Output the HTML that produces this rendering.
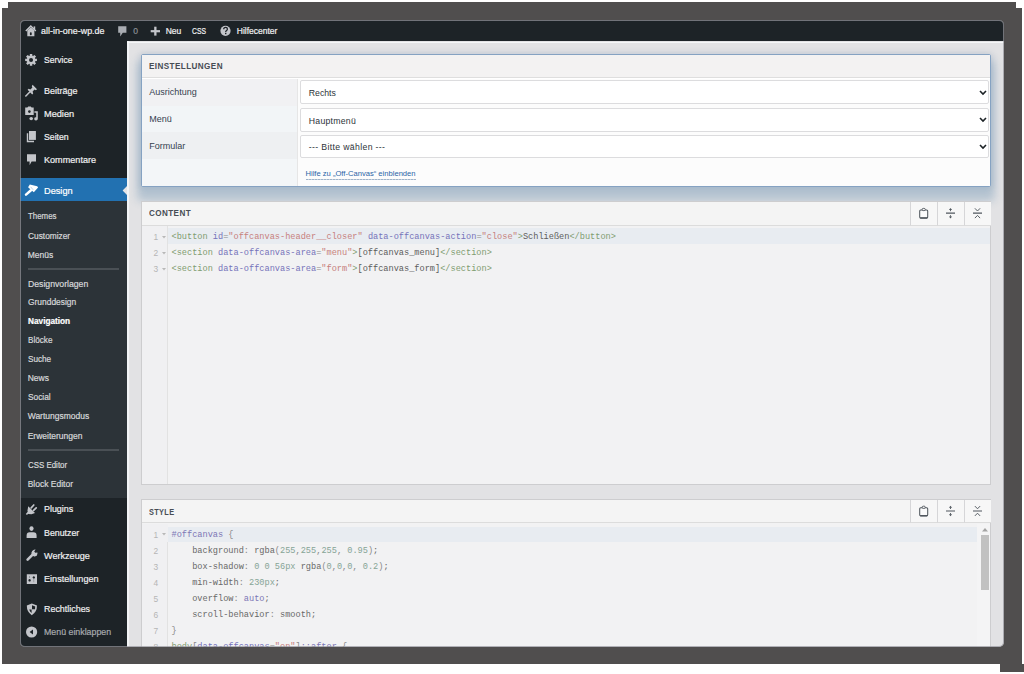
<!DOCTYPE html>
<html><head><meta charset="utf-8">
<style>
*{margin:0;padding:0;box-sizing:border-box}
html,body{width:1024px;height:674px;overflow:hidden;background:#fff;font-family:"Liberation Sans",sans-serif}
.a{position:absolute}
.t{position:absolute;line-height:1;white-space:nowrap;-webkit-text-stroke:0.2px currentColor}
.m{font-family:"Liberation Mono",monospace;white-space:pre;color:#555;-webkit-text-stroke:0}
.ln{-webkit-text-stroke:0}
.d{-webkit-text-stroke:0}
.h{-webkit-text-stroke:0}
.fr{position:absolute;background:#504e4e}
#screen{position:absolute;left:20px;top:20px;width:984px;height:627px;background:#e2e2e4;border-radius:5px;overflow:hidden}
#ring{position:absolute;left:20px;top:20px;width:984px;height:627px;border-radius:5px;box-shadow:inset 0 0 0 1px rgba(150,150,156,0.7)}
svg{position:absolute;overflow:visible}
.tg{color:#7f9c70}.at{color:#7673ba}.st{color:#c77f7d}.tx{color:#5c5c5c}.nm{color:#86a496}.pu{color:#7d76b5}.gr{color:#8a8a8a}.pr{color:#686868}
</style></head>
<body>
<div class="fr" style="left:8px;top:2px;width:1008px;height:8px"></div>
<div class="fr" style="left:2px;top:8px;width:1020px;height:656px"></div>
<div class="fr" style="left:1000px;top:664px;width:24px;height:8px"></div>
<div id="screen">
<div class="a" style="left:0.00px;top:0.00px;width:984.00px;height:21.00px;background:#1d2327;"></div>
<div class="t " style="left:21.20px;top:7.20px;font-size:8.5px;color:#f0f0f1;transform:scaleX(1.050);transform-origin:0 0;">all-in-one-wp.de</div>
<div class="t " style="left:113.30px;top:7.20px;font-size:8.5px;color:#8c8f94;">0</div>
<div class="t " style="left:145.70px;top:7.20px;font-size:8.5px;color:#f0f0f1;">Neu</div>
<div class="t " style="left:171.70px;top:7.20px;font-size:8.5px;color:#f0f0f1;transform:scaleX(0.800);transform-origin:0 0;">CSS</div>
<div class="t " style="left:216.80px;top:7.20px;font-size:8.5px;color:#f0f0f1;">Hilfecenter</div>
<div class="a" style="left:0.00px;top:21.00px;width:107.00px;height:606.00px;background:#1d2327;"></div>
<div class="a" style="left:0.00px;top:158.20px;width:107.00px;height:22.80px;background:#2271b1;"></div>
<div class="a" style="left:0.00px;top:181.00px;width:107.00px;height:296.70px;background:#2c3338;"></div>
<div class="t " style="left:23.60px;top:35.44px;font-size:9.4px;color:#f0f0f1;transform:scaleX(0.910);transform-origin:0 0;">Service</div>
<div class="t " style="left:23.60px;top:65.94px;font-size:9.4px;color:#f0f0f1;transform:scaleX(0.960);transform-origin:0 0;">Beiträge</div>
<div class="t " style="left:23.60px;top:89.04px;font-size:9.4px;color:#f0f0f1;transform:scaleX(0.980);transform-origin:0 0;">Medien</div>
<div class="t " style="left:23.60px;top:112.24px;font-size:9.4px;color:#f0f0f1;transform:scaleX(0.930);transform-origin:0 0;">Seiten</div>
<div class="t " style="left:23.60px;top:135.24px;font-size:9.4px;color:#f0f0f1;transform:scaleX(0.970);transform-origin:0 0;">Kommentare</div>
<div class="t " style="left:23.60px;top:165.64px;font-size:9.4px;color:#fff;transform:scaleX(0.980);transform-origin:0 0;">Design</div>
<div class="t " style="left:23.60px;top:484.34px;font-size:9.4px;color:#f0f0f1;transform:scaleX(0.950);transform-origin:0 0;">Plugins</div>
<div class="t " style="left:23.60px;top:507.94px;font-size:9.4px;color:#f0f0f1;transform:scaleX(0.940);transform-origin:0 0;">Benutzer</div>
<div class="t " style="left:23.60px;top:530.84px;font-size:9.4px;color:#f0f0f1;transform:scaleX(0.970);transform-origin:0 0;">Werkzeuge</div>
<div class="t " style="left:23.60px;top:554.24px;font-size:9.4px;color:#f0f0f1;transform:scaleX(0.970);transform-origin:0 0;">Einstellungen</div>
<div class="t " style="left:23.60px;top:584.44px;font-size:9.4px;color:#f0f0f1;transform:scaleX(0.950);transform-origin:0 0;">Rechtliches</div>
<div class="t " style="left:23.60px;top:607.04px;font-size:9.4px;color:#a7aaad;transform:scaleX(0.940);transform-origin:0 0;">Menü einklappen</div>
<div class="t " style="left:7.70px;top:191.80px;font-size:8.5px;color:#d6d7d9;transform:scaleX(0.930);transform-origin:0 0;">Themes</div>
<div class="t " style="left:7.70px;top:211.60px;font-size:8.5px;color:#d6d7d9;transform:scaleX(0.980);transform-origin:0 0;">Customizer</div>
<div class="t " style="left:7.70px;top:230.60px;font-size:8.5px;color:#d6d7d9;transform:scaleX(1.000);transform-origin:0 0;">Menüs</div>
<div class="t " style="left:7.70px;top:259.60px;font-size:8.5px;color:#d6d7d9;transform:scaleX(1.020);transform-origin:0 0;">Designvorlagen</div>
<div class="t " style="left:7.70px;top:278.40px;font-size:8.5px;color:#d6d7d9;transform:scaleX(0.990);transform-origin:0 0;">Grunddesign</div>
<div class="t " style="left:7.70px;top:297.20px;font-size:8.5px;color:#fff;font-weight:bold;transform:scaleX(0.970);transform-origin:0 0;">Navigation</div>
<div class="t " style="left:7.70px;top:316.20px;font-size:8.5px;color:#d6d7d9;transform:scaleX(0.960);transform-origin:0 0;">Blöcke</div>
<div class="t " style="left:7.70px;top:335.20px;font-size:8.5px;color:#d6d7d9;transform:scaleX(0.960);transform-origin:0 0;">Suche</div>
<div class="t " style="left:7.70px;top:354.20px;font-size:8.5px;color:#d6d7d9;transform:scaleX(1.000);transform-origin:0 0;">News</div>
<div class="t " style="left:7.70px;top:373.20px;font-size:8.5px;color:#d6d7d9;transform:scaleX(0.980);transform-origin:0 0;">Social</div>
<div class="t " style="left:7.70px;top:392.20px;font-size:8.5px;color:#d6d7d9;transform:scaleX(1.000);transform-origin:0 0;">Wartungsmodus</div>
<div class="t " style="left:7.70px;top:411.80px;font-size:8.5px;color:#d6d7d9;transform:scaleX(1.000);transform-origin:0 0;">Erweiterungen</div>
<div class="t " style="left:7.70px;top:440.80px;font-size:8.5px;color:#d6d7d9;transform:scaleX(0.930);transform-origin:0 0;">CSS Editor</div>
<div class="t " style="left:7.70px;top:459.60px;font-size:8.5px;color:#d6d7d9;transform:scaleX(1.000);transform-origin:0 0;">Block Editor</div>
<div class="a" style="left:7.70px;top:247.60px;width:91.30px;height:2.00px;background:#4a5055;"></div>
<div class="a" style="left:7.70px;top:428.70px;width:91.30px;height:2.00px;background:#4a5055;"></div>
<svg style="left:101.5px;top:164.8px" width="6" height="11"><path d="M6 0 L0.6 5.5 L6 11 Z" fill="#e4e4e6"/></svg>
<div class="a" style="left:107.00px;top:21.00px;width:1.50px;height:606.00px;background:rgba(245,247,249,0.85);"></div>
<div class="a" style="left:107.00px;top:21.50px;width:877.00px;height:1.50px;background:rgba(248,250,252,0.85);"></div>
<div class="a" style="left:120.50px;top:33.50px;width:850.50px;height:133.20px;background:#fff;border:1px solid #85a2c2;border-radius:2px;box-shadow:0 10px 8px 4px rgba(75,125,165,0.3), 0 0 6px 1px rgba(90,120,160,0.2)"></div>
<div class="a" style="left:121.50px;top:34.50px;width:848.50px;height:23.50px;background:#f3f2f2;border-bottom:1px solid #dedede"></div>
<div class="t h" style="left:128.70px;top:42.37px;font-size:8.9px;color:#474d54;font-weight:bold;letter-spacing:0.45px;transform:scaleX(0.915);transform-origin:0 0;">EINSTELLUNGEN</div>
<div class="a" style="left:121.50px;top:58.50px;width:155.50px;height:27.20px;background:#f1f1f3;"></div>
<div class="a" style="left:121.50px;top:85.70px;width:155.50px;height:26.50px;background:#f2f5f7;"></div>
<div class="a" style="left:121.50px;top:112.20px;width:155.50px;height:26.40px;background:#eef0f2;"></div>
<div class="a" style="left:121.50px;top:138.60px;width:155.50px;height:27.10px;background:#f3f6f8;"></div>
<div class="a" style="left:277.00px;top:58.50px;width:693.00px;height:107.20px;background:#fcfcfc;border-left:1px solid #e6e6e6"></div>
<div class="t d" style="left:129.20px;top:68.08px;font-size:9.0px;color:#35414f;">Ausrichtung</div>
<div class="t d" style="left:129.20px;top:94.88px;font-size:9.0px;color:#35414f;">Menü</div>
<div class="t d" style="left:129.20px;top:121.88px;font-size:9.0px;color:#35414f;">Formular</div>
<div class="a" style="left:279.70px;top:60.20px;width:688.90px;height:23.80px;background:#fff;border:1px solid #dcdcde;border-radius:2px"></div>
<div class="t d" style="left:288.80px;top:68.94px;font-size:8.7px;color:#2c3338;letter-spacing:0px;">Rechts</div>
<svg style="left:959px;top:69.70px" width="8" height="5"><path d="M1 1 L4 4 L7 1" stroke="#1d2327" stroke-width="1.6" fill="none"/></svg>
<div class="a" style="left:279.70px;top:87.80px;width:688.90px;height:23.80px;background:#fff;border:1px solid #dcdcde;border-radius:2px"></div>
<div class="t d" style="left:288.80px;top:96.54px;font-size:8.7px;color:#2c3338;letter-spacing:0.25px;">Hauptmenü</div>
<svg style="left:959px;top:97.30px" width="8" height="5"><path d="M1 1 L4 4 L7 1" stroke="#1d2327" stroke-width="1.6" fill="none"/></svg>
<div class="a" style="left:279.70px;top:114.60px;width:688.90px;height:23.80px;background:#fff;border:1px solid #dcdcde;border-radius:2px"></div>
<div class="t d" style="left:288.80px;top:123.34px;font-size:8.7px;color:#2c3338;letter-spacing:0.35px;">--- Bitte wählen ---</div>
<svg style="left:959px;top:124.10px" width="8" height="5"><path d="M1 1 L4 4 L7 1" stroke="#1d2327" stroke-width="1.6" fill="none"/></svg>
<div class="t h" style="left:285.50px;top:149.87px;font-size:7.6px;color:#2a64a6;">Hilfe zu „Off-Canvas“ einblenden</div>
<div class="a" style="left:285.50px;top:158.60px;width:110.00px;height:1.00px;background:repeating-linear-gradient(90deg,#9fb3c9 0 2px,#c8d3df 2px 3px);"></div>
<div class="a" style="left:121.00px;top:181.00px;width:850.00px;height:283.70px;background:#f2f2f3;border:1px solid #cdcdcf"></div>
<div class="a" style="left:122.00px;top:182.00px;width:848.00px;height:23.50px;background:#f4f4f4;border-bottom:1px solid #dcdcdc"></div>
<div class="t h" style="left:128.80px;top:189.37px;font-size:8.9px;color:#474d54;font-weight:bold;letter-spacing:0.45px;transform:scaleX(0.912);transform-origin:0 0;">CONTENT</div>
<div class="a" style="left:890.00px;top:182.00px;width:27.00px;height:23.50px;background:#f7f7f7;border-left:1px solid #d6d6d8;border-bottom:1px solid #dcdcdc"></div>
<div class="a" style="left:917.00px;top:182.00px;width:27.00px;height:23.50px;background:#f7f7f7;border-left:1px solid #d6d6d8;border-bottom:1px solid #dcdcdc"></div>
<div class="a" style="left:944.00px;top:182.00px;width:27.00px;height:23.50px;background:#f7f7f7;border-left:1px solid #d6d6d8;border-bottom:1px solid #dcdcdc"></div>
<div class="a" style="left:122.00px;top:206.00px;width:26.00px;height:257.70px;background:#f0f0f2;"></div>
<div class="a" style="left:147.30px;top:206.00px;width:1.00px;height:257.70px;background:#e2e2e2;"></div>
<div class="a" style="left:148.00px;top:208.30px;width:822.00px;height:16.00px;background:#e8ecf1;"></div>
<div class="t m" style="left:151.50px;top:212.60px;font-size:8.62px;"><span class="tg">&lt;button</span> <span class="at">id</span><span class="gr">=</span><span class="st">"offcanvas-header__closer"</span> <span class="at">data-offcanvas-action</span><span class="gr">=</span><span class="st">"close"</span><span class="tg">&gt;</span><span class="tx">Schließen</span><span class="tg">&lt;/button&gt;</span></div>
<div class="t ln" style="left:133.60px;top:212.79px;font-size:8.4px;color:#b5b5b5;">1</div>
<svg style="left:142px;top:215.90px" width="4" height="3"><path d="M0 0 L4 0 L2 2.5Z" fill="#b8b8b8"/></svg>
<div class="t m" style="left:151.50px;top:228.60px;font-size:8.62px;"><span class="tg">&lt;section</span> <span class="at">data-offcanvas-area</span><span class="gr">=</span><span class="st">"menu"</span><span class="tg">&gt;</span><span class="tx">[offcanvas_menu]</span><span class="tg">&lt;/section&gt;</span></div>
<div class="t ln" style="left:133.60px;top:228.79px;font-size:8.4px;color:#b5b5b5;">2</div>
<svg style="left:142px;top:231.90px" width="4" height="3"><path d="M0 0 L4 0 L2 2.5Z" fill="#b8b8b8"/></svg>
<div class="t m" style="left:151.50px;top:244.60px;font-size:8.62px;"><span class="tg">&lt;section</span> <span class="at">data-offcanvas-area</span><span class="gr">=</span><span class="st">"form"</span><span class="tg">&gt;</span><span class="tx">[offcanvas_form]</span><span class="tg">&lt;/section&gt;</span></div>
<div class="t ln" style="left:133.60px;top:244.79px;font-size:8.4px;color:#b5b5b5;">3</div>
<svg style="left:142px;top:247.90px" width="4" height="3"><path d="M0 0 L4 0 L2 2.5Z" fill="#b8b8b8"/></svg>
<div class="a" style="left:121.00px;top:478.80px;width:850.00px;height:161.20px;background:#f2f2f3;border:1px solid #cdcdcf"></div>
<div class="a" style="left:122.00px;top:479.80px;width:848.00px;height:23.50px;background:#f4f4f4;border-bottom:1px solid #dcdcdc"></div>
<div class="t h" style="left:128.80px;top:487.67px;font-size:8.9px;color:#474d54;font-weight:bold;letter-spacing:0.45px;transform:scaleX(0.826);transform-origin:0 0;">STYLE</div>
<div class="a" style="left:890.00px;top:479.80px;width:27.00px;height:23.50px;background:#f7f7f7;border-left:1px solid #d6d6d8;border-bottom:1px solid #dcdcdc"></div>
<div class="a" style="left:917.00px;top:479.80px;width:27.00px;height:23.50px;background:#f7f7f7;border-left:1px solid #d6d6d8;border-bottom:1px solid #dcdcdc"></div>
<div class="a" style="left:944.00px;top:479.80px;width:27.00px;height:23.50px;background:#f7f7f7;border-left:1px solid #d6d6d8;border-bottom:1px solid #dcdcdc"></div>
<div class="a" style="left:122.00px;top:504.00px;width:26.00px;height:136.00px;background:#f0f0f2;"></div>
<div class="a" style="left:147.30px;top:521.60px;width:1.00px;height:118.40px;background:#e2e2e2;"></div>
<div class="a" style="left:148.00px;top:506.60px;width:809.00px;height:15.00px;background:#e8ecf1;"></div>
<div class="t m" style="left:151.50px;top:510.60px;font-size:8.62px;"><span class="pu">#offcanvas</span> <span class="gr">{</span></div>
<div class="t ln" style="left:133.60px;top:510.79px;font-size:8.4px;color:#b5b5b5;">1</div>
<div class="t m" style="left:151.50px;top:526.60px;font-size:8.62px;">    <span class="pr">background</span><span class="gr">:</span> <span class="pr">rgba</span><span class="gr">(</span><span class="nm">255</span><span class="gr">,</span><span class="nm">255</span><span class="gr">,</span><span class="nm">255</span><span class="gr">,</span> <span class="nm">0.95</span><span class="gr">)</span><span class="pr">;</span></div>
<div class="t ln" style="left:133.60px;top:526.79px;font-size:8.4px;color:#b5b5b5;">2</div>
<div class="t m" style="left:151.50px;top:542.60px;font-size:8.62px;">    <span class="pr">box-shadow</span><span class="gr">:</span> <span class="nm">0 0 56px</span> <span class="pr">rgba</span><span class="gr">(</span><span class="nm">0</span><span class="gr">,</span><span class="nm">0</span><span class="gr">,</span><span class="nm">0</span><span class="gr">,</span> <span class="nm">0.2</span><span class="gr">)</span><span class="pr">;</span></div>
<div class="t ln" style="left:133.60px;top:542.79px;font-size:8.4px;color:#b5b5b5;">3</div>
<div class="t m" style="left:151.50px;top:558.60px;font-size:8.62px;">    <span class="pr">min-width</span><span class="gr">:</span> <span class="nm">230px</span><span class="pr">;</span></div>
<div class="t ln" style="left:133.60px;top:558.79px;font-size:8.4px;color:#b5b5b5;">4</div>
<div class="t m" style="left:151.50px;top:574.60px;font-size:8.62px;">    <span class="pr">overflow</span><span class="gr">:</span> <span class="pu">auto</span><span class="pr">;</span></div>
<div class="t ln" style="left:133.60px;top:574.79px;font-size:8.4px;color:#b5b5b5;">5</div>
<div class="t m" style="left:151.50px;top:590.60px;font-size:8.62px;">    <span class="pr">scroll-behavior</span><span class="gr">:</span> <span class="pr">smooth</span><span class="pr">;</span></div>
<div class="t ln" style="left:133.60px;top:590.79px;font-size:8.4px;color:#b5b5b5;">6</div>
<div class="t m" style="left:151.50px;top:606.60px;font-size:8.62px;"><span class="gr">}</span></div>
<div class="t ln" style="left:133.60px;top:606.79px;font-size:8.4px;color:#b5b5b5;">7</div>
<div class="t m" style="left:151.50px;top:622.60px;font-size:8.62px;"><span class="tg">body</span><span class="gr">[</span><span class="at">data-offcanvas</span><span class="gr">=</span><span class="st">"on"</span><span class="gr">]</span><span class="pu">::after</span> <span class="gr">{</span></div>
<div class="t ln" style="left:133.60px;top:622.79px;font-size:8.4px;color:#b5b5b5;">8</div>
<svg style="left:142px;top:512.60px" width="4" height="3"><path d="M0 0 L4 0 L2 2.5Z" fill="#b8b8b8"/></svg>
<div class="a" style="left:957.00px;top:504.00px;width:13.00px;height:123.00px;background:#f4f4f5;"></div>
<div class="a" style="left:960.50px;top:515.00px;width:8.50px;height:55.00px;background:#c1c1c1;"></div>
<svg style="left:962px;top:508px" width="6" height="4"><path d="M0 3.5 L3 0 L6 3.5Z" fill="#a3a3a3"/></svg>
<svg style="left:-20px;top:-20px" width="1024" height="674" viewBox="0 0 1024 674"><path d="M25.8 31 L30.8 26 L35.8 31" stroke="#c3c5ca" stroke-width="1.4" fill="none" stroke-linejoin="miter"/><rect x="33.6" y="26.4" width="1.6" height="3" fill="#c3c5ca"/><path d="M27.3 30.6 L30.8 27.2 L34.4 30.6 L34.4 36.2 L27.3 36.2Z" fill="#c3c5ca"/><rect x="29.9" y="32.3" width="1.8" height="3" rx="0.8" fill="#1d2327"/><path d="M118.2 26.2 h8.2 v6.6 h-3.6 l-2.6 3.6 v-3.6 h-2z" fill="#a9adb3"/><rect x="150.7" y="30.1" width="9.3" height="2.2" fill="#c3c5ca"/><rect x="154.2" y="26.7" width="2.3" height="8.9" fill="#c3c5ca"/><circle cx="225.5" cy="30.8" r="5.1" fill="#c3c5ca"/><path d="M223.7 29.3 Q223.7 27.4 225.6 27.4 Q227.4 27.4 227.4 29.1 Q227.4 30.2 226.3 30.8 Q225.7 31.2 225.7 32" stroke="#1d2327" stroke-width="1.3" fill="none"/><rect x="225" y="32.8" width="1.4" height="1.4" fill="#1d2327"/><path d="M35.16 58.63 L36.93 58.71 L36.93 61.09 L35.16 61.17 L34.85 61.91 L36.05 63.22 L34.37 64.90 L33.06 63.70 L32.32 64.01 L32.24 65.78 L29.86 65.78 L29.78 64.01 L29.04 63.70 L27.73 64.90 L26.05 63.22 L27.25 61.91 L26.94 61.17 L25.17 61.09 L25.17 58.71 L26.94 58.63 L27.25 57.89 L26.05 56.58 L27.73 54.90 L29.04 56.10 L29.78 55.79 L29.86 54.02 L32.24 54.02 L32.32 55.79 L33.06 56.10 L34.37 54.90 L36.05 56.58 L34.85 57.89Z M33.05 59.90 A2.0 2.0 0 1 0 29.05 59.90 A2.0 2.0 0 1 0 33.05 59.90Z" fill="#c3c5ca" fill-rule="evenodd"/><path d="M32.6 84.8 L37 89.2 L35.8 90.2 L34.6 89.6 L32.6 91.6 L33.2 93.4 L32.2 94.4 L27.6 89.8 L28.6 88.8 L30.4 89.4 L32.4 87.4 L31.8 86.2Z" fill="#c3c5ca"/><path d="M30 91.8 L25.4 96.6" stroke="#c3c5ca" stroke-width="1.5"/><path d="M25.2 107.6 h2.2 l0.8 -1 h2.6 l0.8 1 h2.1 v7.4 h-8.5z" fill="#c3c5ca"/><circle cx="29.4" cy="111.6" r="1.3" fill="#1d2327"/><path d="M34.4 111.2 h3.4 v7.8 a1.8 1.6 0 1 1 -1.6 -1.7 v-4.6 h-1.8z" fill="#c3c5ca"/><ellipse cx="31.2" cy="118.6" rx="1.8" ry="1.6" fill="#c3c5ca"/><rect x="29" y="131" width="6.9" height="8.9" fill="#c3c5ca"/><path d="M26.8 133.2 h1.4 v7.6 h5.8 v1.4 h-7.2z" fill="#c3c5ca"/><path d="M27 154.2 h9 v7.4 h-4.4 l-2 3.6 v-3.6 h-2.6z" fill="#c3c5ca"/><path d="M29.8 184.6 L37.2 186.2 L38.1 187.4 L33.8 192.2 L28.1 187.3Z" fill="#fff"/><path d="M30.6 186.8 L33.2 189.8" stroke="#9fc0dc" stroke-width="0.7"/><path d="M31 190.2 L26 194.6" stroke="#fff" stroke-width="2.5" stroke-linecap="round"/><path d="M28.2 506.2 L35 513 L31.5 514.2 L28.2 514 L27.5 510.5Z" fill="#c3c5ca"/><path d="M28.6 512 L26.4 514.6" stroke="#c3c5ca" stroke-width="1.6"/><path d="M31.2 507.8 L33.8 505" stroke="#c3c5ca" stroke-width="1.7" stroke-linecap="round"/><path d="M33.6 510.4 L36.2 507.8" stroke="#c3c5ca" stroke-width="1.7" stroke-linecap="round"/><ellipse cx="31.5" cy="528.6" rx="2.1" ry="2.4" fill="#c3c5ca"/><path d="M26.6 538 v-2.6 Q26.6 532.2 29.6 532.2 h3.8 Q36.6 532.2 36.6 535.4 v2.6z" fill="#c3c5ca"/><path d="M27.6 559.6 L33.6 553.6" stroke="#c3c5ca" stroke-width="2.6" stroke-linecap="round"/><path d="M33 550.4 a3.2 3.2 0 1 0 4.4 4.4 l-1.8 0.2 l-1.6 -1.6 z" fill="#c3c5ca"/><path d="M35.6 549.6 A3.3 3.3 0 0 0 32.4 554.8 L34.6 556.4 A3.3 3.3 0 0 0 37.4 552.4 L35.2 552.8 L34.2 551.6Z" fill="#c3c5ca"/><path d="M26.8 574.2 h10.2 v9.8 h-10.2z M29.6 579.1 a1.2 1.2 0 1 0 0.01 0z M33.8 576.3 a1.2 1.2 0 1 0 0.01 0z" fill="#c3c5ca" fill-rule="evenodd"/><rect x="29.2" y="576" width="0.8" height="2" fill="#8d9096"/><rect x="33.4" y="578.6" width="0.8" height="3.6" fill="#8d9096"/><path d="M31.8 603.6 L37 605.6 Q37 612.2 31.8 615.2 Q26.8 612.2 26.8 605.6Z" fill="#c3c5ca"/><path d="M32 605.2 L35.2 606.4 L35 609.2 L32 609.2Z M29.2 609.6 L31.6 609.6 L31.6 613 Q29.8 611.8 29.2 609.6Z" fill="#1d2327"/><circle cx="31.6" cy="632" r="5.6" fill="#c3c5ca"/><path d="M29.6 632 L33 629.6 L33 634.4Z" fill="#1d2327"/><rect x="919.7" y="209.9" width="8" height="8" rx="1" stroke="#50575e" stroke-width="1.05" fill="#fbfbfb"/><path d="M920.2 217.9 h7" stroke="#50575e" stroke-width="1.5"/><rect x="922.1" y="208.4" width="3.2" height="2.2" rx="1.1" stroke="#50575e" stroke-width="0.9" fill="#fbfbfb"/><path d="M946 213.2 h9" stroke="#50575e" stroke-width="1.2"/><path d="M950.5 207.9 l1.6 2 h-3.2z M950.5 218.5 l1.6 -2 h-3.2z" fill="#50575e"/><path d="M950.5 209.6 v1.6 M950.5 215.2 v1.6" stroke="#50575e" stroke-width="0.9"/><path d="M973 213.2 h9" stroke="#50575e" stroke-width="1.2"/><path d="M974.9 208.3 l2.6 2.7 l2.6 -2.7 M974.9 218.1 l2.6 -2.7 l2.6 2.7" stroke="#50575e" stroke-width="0.95" fill="none"/><rect x="919.7" y="507.70000000000005" width="8" height="8" rx="1" stroke="#50575e" stroke-width="1.05" fill="#fbfbfb"/><path d="M920.2 515.7 h7" stroke="#50575e" stroke-width="1.5"/><rect x="922.1" y="506.20000000000005" width="3.2" height="2.2" rx="1.1" stroke="#50575e" stroke-width="0.9" fill="#fbfbfb"/><path d="M946 511.0 h9" stroke="#50575e" stroke-width="1.2"/><path d="M950.5 505.70000000000005 l1.6 2 h-3.2z M950.5 516.3 l1.6 -2 h-3.2z" fill="#50575e"/><path d="M950.5 507.4 v1.6 M950.5 513.0 v1.6" stroke="#50575e" stroke-width="0.9"/><path d="M973 511.0 h9" stroke="#50575e" stroke-width="1.2"/><path d="M974.9 506.1 l2.6 2.7 l2.6 -2.7 M974.9 515.9 l2.6 -2.7 l2.6 2.7" stroke="#50575e" stroke-width="0.95" fill="none"/></svg>
</div>
<div id="ring"></div>
</body></html>
